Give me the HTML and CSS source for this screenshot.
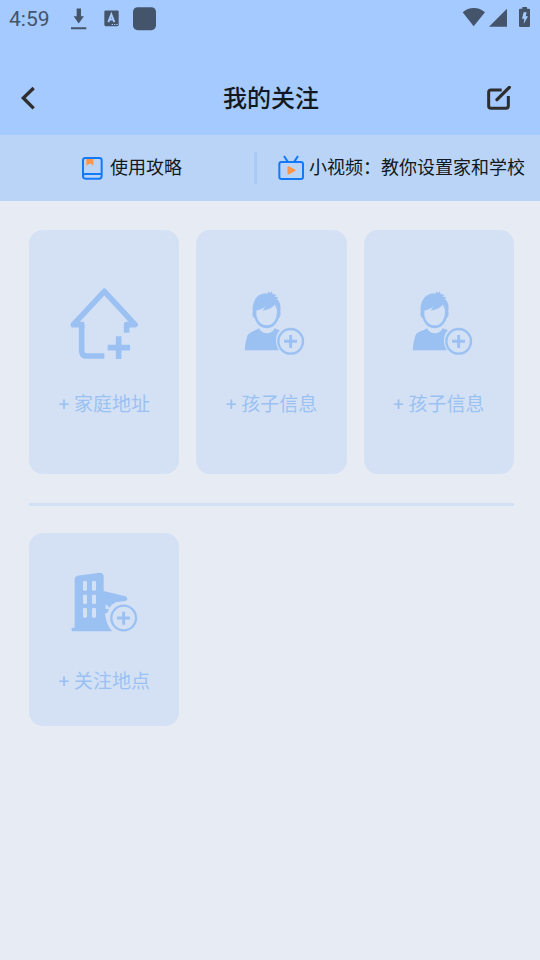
FILE: index.html
```html
<!DOCTYPE html>
<html lang="zh-CN">
<head>
<meta charset="utf-8">
<meta name="viewport" content="width=device-width, initial-scale=1">
<title>我的关注</title>
<link rel="stylesheet" href="styles.css">
</head>
<body>
<svg class="symbols" aria-hidden="true">
  <symbol id="child" viewBox="135 201 216 216">
    <path fill="currentColor" fill-rule="evenodd" d="M188 272C186 246 196 221 225 217L233 218 234 211 240 217 245 211 248 219 259 221 255 227 265 229 261 234C271 243 273 255 271 271C273 280 271 288 266 292C260 310 247 322 230 322C213 322 199 310 194 292C188 288 186 280 188 272ZM199 269C197 297 212 313 230 313C249 313 262 296 261 266L255 251C246 261 233 266 218 269L226 256C217 264 208 267 199 269Z"/>
    <path fill="currentColor" d="M164 388C166 370 168 352 173 342C179 332 194 330 207 322C216 342 245 342 254 322L270 328C255 341 254 370 267 388Z"/>
    <circle cx="302" cy="361" r="37" fill="none" stroke="currentColor" stroke-width="7"/>
    <path d="M302 342V381M282 361H321" fill="none" stroke="currentColor" stroke-width="9"/>
  </symbol>
</svg>

<div class="status">
  <span class="clock">4:59</span>
  <svg class="notices" viewBox="204 15 270 80" aria-hidden="true">
    <path fill="currentColor" d="M230 25H243V48H252L236 70 221 48H230ZM213 81H259V87H213Z"/>
    <rect x="313" y="31" width="43" height="47" rx="4" fill="currentColor"/>
    <path class="cut" d="M325 66L334 43 343 66M328 58H340" stroke-width="6"/>
    <path class="cut" d="M335 73H339M342 73H346M349 73H353" stroke-width="3"/>
    <rect x="399" y="21" width="69" height="69" rx="14" fill="currentColor"/>
  </svg>
  <svg class="signals" viewBox="66 15 210 72" aria-hidden="true">
    <path fill="currentColor" d="M68 37C86 20 117 20 135 37L101 79ZM147 80L201 26V80ZM240 26H247V21H261V26H267Q270 26 270 30V77Q270 81 266 81H241Q237 81 237 77V30Q237 26 240 26Z"/>
    <path class="bolt" d="M251 37H260L257 49H264L251 72 253 56H246Z"/>
  </svg>
</div>

<header class="header">
  <button class="icon-button" type="button" aria-label="返回">
    <svg class="glyph" viewBox="48 48 72 72" aria-hidden="true"><path d="M101 54L70 84 101 115" fill="none" stroke="currentColor" stroke-width="10"/></svg>
  </button>
  <h1 class="title">我的关注</h1>
  <button class="icon-button edit" type="button" aria-label="编辑">
    <svg class="glyph" viewBox="141 256 72 72" aria-hidden="true"><path d="M185 268H153Q146 268 146 275V316Q146 323 153 323H198Q205 323 205 316V286" fill="none" stroke="currentColor" stroke-width="9"/><path d="M171 297L208 260" fill="none" stroke="currentColor" stroke-width="10" stroke-linecap="round"/></svg>
  </button>
</header>

<nav class="tips">
  <a class="tip guide" href="#guide">
    <svg class="tip-icon" viewBox="56 44 78 78" aria-hidden="true">
      <path fill="#ff9547" d="M78 54H99V76L89 69 78 76Z"/>
      <path d="M68 107V60Q68 53 75 53H117Q124 53 124 60V101H75Q68 101 68 108Q68 115 76 115H116Q124 115 124 107V100" fill="none" stroke="#1479f5" stroke-width="6"/>
    </svg>
    <span>使用攻略</span>
  </a>
  <a class="tip video" href="#video">
    <svg class="tip-icon" viewBox="55 42 78 78" aria-hidden="true">
      <rect x="59" y="63" width="71" height="51" rx="6" fill="none" stroke="#1479f5" stroke-width="6"/>
      <path d="M73 45L84 62M115 45L104 62" stroke="#1479f5" stroke-width="6"/>
      <path d="M86 78L105 88 86 98Z" fill="#ff9547" stroke="#ff9547" stroke-width="5" stroke-linejoin="round"/>
    </svg>
    <span>小视频：教你设置家和学校</span>
  </a>
</nav>

<main class="content">
  <section class="cards">
    <button class="card tall" type="button">
      <svg class="card-icon" viewBox="144 201 216 216" aria-hidden="true">
        <path d="M193 311H160L253 211 345 311H320V335" fill="none" stroke="currentColor" stroke-width="17" stroke-linejoin="round"/>
        <path d="M185 310V389Q185 405 201 405H253M263 380H330M296 346V414" fill="none" stroke="currentColor" stroke-width="17"/>
      </svg>
      <span>+ 家庭地址</span>
    </button>
    <button class="card tall" type="button">
      <svg class="card-icon" aria-hidden="true"><use href="#child"/></svg>
      <span>+ 孩子信息</span>
    </button>
    <button class="card tall" type="button">
      <svg class="card-icon" aria-hidden="true"><use href="#child"/></svg>
      <span>+ 孩子信息</span>
    </button>
  </section>
  <hr class="divider">
  <section class="cards">
    <button class="card" type="button">
      <svg class="card-icon" viewBox="144 225 216 216" aria-hidden="true">
        <path fill="currentColor" d="M155 424V413H164V267Q164 259 172 257L239 248Q251 248 251 260V303L316 319Q323 321 322 329L316 333 287 337Q275 343 269 353L257 343V357H267L263 367 255 372C258 394 264 410 277 424Z"/>
        <g class="window"><rect x="189" y="273" width="12" height="29" rx="4"/><rect x="216" y="273" width="12" height="29" rx="4"/><rect x="189" y="314" width="12" height="28" rx="4"/><rect x="216" y="314" width="12" height="28" rx="4"/><rect x="189" y="354" width="12" height="29" rx="4"/><rect x="216" y="354" width="12" height="29" rx="4"/></g>
        <circle cx="311" cy="384" r="37" fill="none" stroke="currentColor" stroke-width="7"/>
        <path d="M311 365V404M291 384H330" stroke="currentColor" stroke-width="9"/>
      </svg>
      <span>+ 关注地点</span>
    </button>
  </section>
</main>
</body>
</html>
```
FILE: styles.css
```css
* {
  box-sizing: border-box;
}

body {
  margin: 0;
  min-height: 100vh;
  background: #e7ecf4;
  color: #111820;
  font-family: Roboto, "Noto Sans CJK SC", sans-serif;
}

button {
  border: 0;
  padding: 0;
  background: none;
  font: inherit;
  cursor: pointer;
}

svg {
  display: block;
  flex: none;
}

.symbols {
  position: absolute;
  width: 0;
  height: 0;
}

.status {
  display: flex;
  align-items: flex-start;
  height: 36px;
  padding: 5px 8px 0 9px;
  background: #a5caff;
  color: #44546b;
}

.clock {
  width: 59px;
  font-size: 21px;
  line-height: 28px;
}

.notices {
  width: 90px;
  height: 27px;
}

.signals {
  width: 70px;
  height: 24px;
  margin-left: auto;
}

.cut {
  fill: none;
  stroke: #a5caff;
}

.bolt {
  fill: #a5caff;
}

.header {
  display: grid;
  grid-template-columns: 1fr auto 1fr;
  align-items: center;
  height: 99px;
  padding: 24px 4px 0;
  background: #a5caff;
}

.icon-button {
  display: grid;
  place-items: center;
  width: 48px;
  height: 48px;
  color: #2e2e2e;
}

.edit {
  justify-self: end;
  margin-right: 13px;
}

.glyph {
  width: 24px;
  height: 24px;
}

.title {
  margin: 0;
  padding: 2px 0 0 2px;
  font-size: 24px;
  font-weight: 500;
  line-height: 32px;
}

.tips {
  display: flex;
  align-items: center;
  height: 66px;
  background: #bad4f8;
}

.tip {
  display: flex;
  align-items: center;
  gap: 5px;
  height: 32px;
  color: inherit;
  font-size: 18px;
  line-height: 24px;
  text-decoration: none;
  white-space: nowrap;
}

.guide {
  flex: 1;
  justify-content: center;
  padding-left: 7px;
  border-right: 3px solid #a8caf7;
}

.video {
  padding: 0 15px 0 21px;
}

.tip-icon {
  width: 26px;
  height: 26px;
}

.content {
  padding: 29px 26px 29px 29px;
}

.cards {
  display: grid;
  grid-template-columns: repeat(3, 1fr);
  gap: 17px;
}

.card {
  display: flex;
  flex-direction: column;
  align-items: center;
  justify-content: center;
  gap: 31px;
  min-height: 193px;
  padding-top: 2px;
  border-radius: 14px;
  background: #d4e1f4;
  color: #9bc1f3;
  font-size: 19px;
  line-height: 28px;
}

.tall {
  min-height: 244px;
}

.card-icon {
  width: 72px;
  height: 72px;
}

.window {
  fill: #d4e1f4;
}

.divider {
  height: 3px;
  margin: 29px 0 27px;
  border: 0;
  background: #d1e0f4;
}
```
